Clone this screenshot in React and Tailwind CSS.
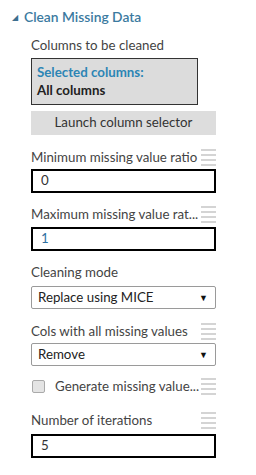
import { useState } from "react";

const Handle = () => (
  <div className="flex flex-col gap-[3px] w-[15px] shrink-0">
    <span className="block h-[2px] bg-[#d4d4d4]" />
    <span className="block h-[2px] bg-[#d4d4d4]" />
    <span className="block h-[2px] bg-[#d4d4d4]" />
    <span className="block h-[2px] bg-[#d4d4d4]" />
  </div>
);

const Label = ({ text, handle }) => (
  <div className="flex items-center justify-between w-[185px] h-[17px] gap-[2px]">
    <span className="whitespace-nowrap">{text}</span>
    {handle && <Handle />}
  </div>
);

const TextBox = ({ value, blue }) => (
  <div className={`w-[185px] h-[24px] border-2 border-black flex items-center pl-[8px] ${blue ? "text-[#2f6f9f]" : "text-[#333]"}`}>
    {value}
  </div>
);

const Dropdown = ({ value }) => (
  <div className="w-[185px] h-[23px] border border-[#9a9a9a] rounded-[2px] flex items-center justify-between pl-[6px] pr-[7px] text-[#222]">
    <span>{value}</span>
    <span className="text-[9px] text-[#111]">▼</span>
  </div>
);

const App = () => {
  const [generate, setGenerate] = useState(false);

  return (
    <div className="w-[256px] h-[475px] bg-white text-[13.3px] text-[#444] font-['Lato','Noto_Sans',sans-serif] leading-none">
      <div className="flex items-center pl-[12px] h-[34px]">
        <span className="text-[8px] text-[#3d6f8e] mr-[6px]">◢</span>
        <span className="text-[13.8px] text-[#3b7aa0] font-semibold">Clean Missing Data</span>
      </div>
      <div className="flex flex-col pl-[31px]">
        <div className="mt-[3px]"><Label text="Columns to be cleaned" /></div>
        <div className="mt-[4px] w-[167px] h-[47px] bg-[#dcdcdc] border border-[#333] flex flex-col justify-center pl-[5px] gap-[5px] font-bold">
          <span className="text-[#2c85b5]">Selected columns:</span>
          <span className="text-[#222]">All columns</span>
        </div>
        <button className="mt-[6px] w-[185px] h-[24px] bg-[#dddddd] text-[#333] flex items-center justify-center">
          Launch column selector
        </button>

        <div className="mt-[14px]"><Label text="Minimum missing value ratio" handle /></div>
        <div className="mt-[3px]"><TextBox value="0" /></div>

        <div className="mt-[13px]"><Label text="Maximum missing value rat..." handle /></div>
        <div className="mt-[4px]"><TextBox value="1" blue /></div>

        <div className="mt-[13px]"><Label text="Cleaning mode" /></div>
        <div className="mt-[5px]"><Dropdown value="Replace using MICE" /></div>

        <div className="mt-[14px]"><Label text="Cols with all missing values" handle /></div>
        <div className="mt-[3px]"><Dropdown value="Remove" /></div>

        <div className="mt-[13px] flex items-center justify-between w-[185px] h-[15px]">
          <div className="flex items-center">
            <button
              onClick={() => setGenerate(!generate)}
              className="w-[13px] h-[13px] ml-[1px] border border-[#aaa] rounded-[2px] bg-[#e4e4e4] shrink-0"
            />
            <span className="ml-[10px] whitespace-nowrap">Generate missing value...</span>
          </div>
          <Handle />
        </div>

        <div className="mt-[18px]"><Label text="Number of iterations" handle /></div>
        <div className="mt-[5px]"><TextBox value="5" /></div>
      </div>
    </div>
  );
};

export default App;
